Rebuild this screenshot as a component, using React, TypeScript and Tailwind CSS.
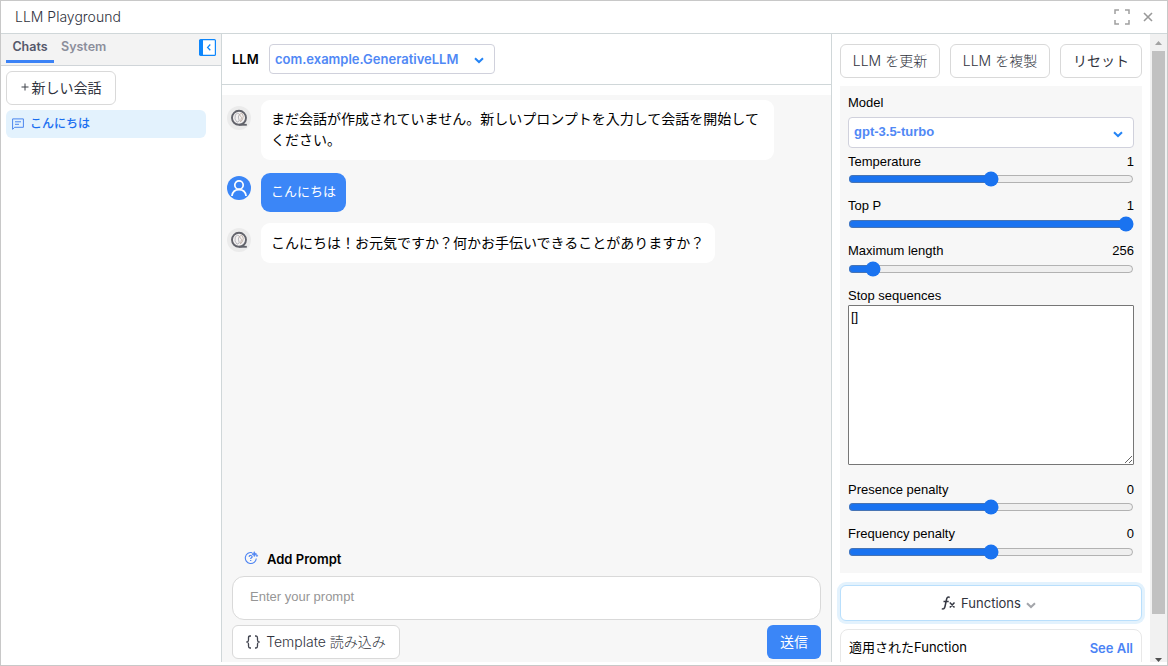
import type { ReactNode } from "react";

const buttonBase =
  "flex shrink-0 items-center justify-center rounded-md border border-[#d9d9d9] bg-white pb-[2px] text-[14px] whitespace-nowrap text-[#30333d]";

function Chevron({ className }: { className: string }) {
  return (
    <svg viewBox="0 0 10 7" className={className} fill="none" stroke="currentColor" strokeWidth="2">
      <path d="M1 1.2 5 5l4-3.8" />
    </svg>
  );
}

function BotAvatar() {
  return (
    <svg viewBox="0 0 24 24" className="h-6 w-6 shrink-0">
      <circle cx="12" cy="12" r="12" fill="#ebebeb" />
      <circle cx="12" cy="11.8" r="7" fill="#f3f1f1" stroke="#62636b" strokeWidth="1.900" />
      <path d="M12 18.800h7.800" stroke="#62636b" strokeWidth="1.800" />
      <path d="M8.300 8.800 10.800 7l1.500 1.500-1 2.500 1 4-2.300 1.200-2-3.200z" fill="none" stroke="#a9a9b0" strokeWidth=".8" />
      <path d="m12.300 8.500 2.500-1.300 1.500 3-.8 3.300-2 2.300 1-4.300z" fill="none" stroke="#b7a79d" strokeWidth=".8" />
    </svg>
  );
}

function UserAvatar() {
  return (
    <svg viewBox="0 0 24 24" className="h-6 w-6 shrink-0" fill="none" stroke="white" strokeWidth="1.700">
      <circle cx="12" cy="12" r="12" fill="#3b86f7" stroke="none" />
      <circle cx="12" cy="9" r="4.200" />
      <path d="M4.900 20c.5-4 3-6.400 7.100-6.400s6.600 2.400 7.100 6.400" />
    </svg>
  );
}

function Message({ avatar, children, className }: { avatar: ReactNode; children: ReactNode; className: string }) {
  return (
    <div className="flex items-start gap-[10px]">
      <div className="pt-[6px]">{avatar}</div>
      <div className={`rounded-[9px] px-[10px] ${className}`}>{children}</div>
    </div>
  );
}

function Slider({ label, value, position, className, inputClassName }: { label: string; value: string; position: number; className: string; inputClassName: string }) {
  return (
    <div className={className}>
      <div className="flex h-[17px] items-center justify-between">
        <span>{label}</span>
        <span>{value}</span>
      </div>
      <input
        type="range"
        min={0}
        max={1000}
        defaultValue={position}
        aria-label={label}
        className={`block h-4 w-full accent-[#1a73f0] ${inputClassName}`}
      />
    </div>
  );
}

function Sidebar() {
  return (
    <aside className="flex w-[221px] shrink-0 flex-col border-r border-[#d0d7d9]">
      <div className="flex h-8 items-start border-b border-[#d0d5d9] bg-[#f3f3f3] pl-[5px] text-[12.500px] font-semibold">
        <div className="flex h-[29px] w-12 items-center justify-center border-b-[3px] border-[#3b82f6] text-[#55586b]">Chats</div>
        <div className="flex h-[26px] items-center pl-[7px] text-[#8b8e9b]">System</div>
        <svg viewBox="0 0 17 17" className="mt-[5px] mr-[5px] ml-auto h-[17px] w-[17px]">
          <rect x=".6" y=".6" width="15.800" height="15.800" rx="1" fill="white" stroke="#0d86fb" strokeWidth="1.200" />
          <path d="M0 1h4v15H0z" fill="#0d86fb" />
          <path d="m11.300 5.500-2.700 2.900 2.700 2.900" fill="none" stroke="#0d86fb" strokeWidth="1.300" />
        </svg>
      </div>
      <div className="flex flex-col items-start gap-[5px] px-[5px] pt-[5px]">
        <button className={`${buttonBase} h-[34px] w-[110px] gap-[3px]`}>
          <svg viewBox="0 0 8 8" className="h-2 w-2" stroke="#3d4049">
            <path d="M4 .5v7M.5 4h7" />
          </svg>
          新しい会話
        </button>
        <div className="flex h-7 w-[200px] items-center gap-[6px] rounded-md bg-[#e3f2fd] pl-[6px] text-[12px] font-medium text-[#1a6ef0]">
          <svg viewBox="0 0 12 12" className="h-3 w-3" fill="none" stroke="#4b86ee">
            <path d="M.6 11.300V.9h10.800v8.400H2.700zM3 3.800h6M3 6.300h4" />
          </svg>
          <span className="-mt-px">こんにちは</span>
        </div>
      </div>
    </aside>
  );
}

function Conversation() {
  return (
    <main className="flex w-[610px] shrink-0 flex-col border-r border-[#d0d7d9]">
      <div className="flex h-[51px] shrink-0 items-center border-b border-[#d0d7d9] pl-[10px]">
        <span className="mt-[2px] w-[37px] text-[13px] font-semibold">LLM</span>
        <div className="flex h-[30px] w-[226px] items-center justify-between rounded border border-[#d0d1dc] pr-[10px] pl-[5px] text-[13px] font-semibold text-[#5088f5]">
          <span className="mt-px">com.example.GenerativeLLM</span>
          <Chevron className="mt-[2px] h-[7px] w-[10px] text-[#2484f5]" />
        </div>
      </div>
      <div className="mt-[10px] flex min-h-0 flex-1 flex-col bg-[#f7f7f7]">
        <div className="flex flex-1 flex-col pt-[5px] pl-[5px] text-[14px]">
          <Message avatar={<BotAvatar />} className="h-[60px] w-[513px] bg-white pt-[9px] leading-[20.500px]">
            まだ会話が作成されていません。新しいプロンプトを入力して会話を開始してください。
          </Message>
          <div className="h-[13px]" />
          <Message
            avatar={<div className="-mt-[3px]"><UserAvatar /></div>}
            className="h-[39px] w-[85px] bg-[#3b86f7] text-[13px] leading-[37px] whitespace-nowrap text-white"
          >
            こんにちは
          </Message>
          <div className="h-[11px]" />
          <Message avatar={<div className="-mt-px"><BotAvatar /></div>} className="h-10 w-[454px] bg-white leading-[39px] whitespace-nowrap">
            こんにちは！お元気ですか？何かお手伝いできることがありますか？
          </Message>
        </div>
        <div className="flex h-[27px] items-start gap-2 pl-[22px] text-[13px] font-semibold">
          <svg viewBox="0 0 15 15" className="mt-[2px] h-[15px] w-[15px]" fill="none" stroke="#4c83f2">
            <path d="M8.300 1.700A5.500 5.500 0 1 0 12.300 7.500" strokeWidth="1.100" />
            <path d="M5.100 5.900c.1-2 3.200-1.800 3 0-.1 1-1.400.9-1.400 2.100M6.700 9v1.100" strokeWidth="1.200" />
            <path d="m10.300.7.700 1.700 1.700.7-1.700.7-.7 1.700-.7-1.700-1.700-.7 1.700-.7zM12.900 3.500v2.400M11.700 4.700h2.400" fill="#4c83f2" strokeWidth=".8" />
          </svg>
          <span className="leading-[21px]">Add Prompt</span>
        </div>
        <div className="mx-[10px] flex h-11 shrink-0 items-center rounded-xl border border-[#d9d9d9] bg-white pb-[3px] pl-[17px] font-['Liberation_Sans'] text-[13px] text-[#969696]">
          Enter your prompt
        </div>
        <div className="mx-[10px] mt-[5px] mb-[3px] flex justify-between">
          <button className={`${buttonBase} h-[34px] w-[168px] gap-[6px]`}>
            <svg viewBox="0 0 14 14" className="mt-[2px] h-[14px] w-[14px]" fill="none" stroke="#41444f" strokeWidth="1.300">
              <path d="M5 1H4C2.500 1 2.500 2 2.500 3v2c0 1-.5 1.700-1.500 2 1 .3 1.500 1 1.500 2v2c0 1 0 2 1.500 2h1M9 1h1c1.500 0 1.500 1 1.500 2v2c0 1 .5 1.700 1.500 2-1 .3-1.500 1-1.500 2v2c0 1 0 2-1.500 2H9" />
            </svg>
            <span className="font-light">Template 読み込み</span>
          </button>
          <button className="h-[34px] w-[54px] rounded-md bg-[#3b86f7] pb-[2px] text-[14px] text-white">送信</button>
        </div>
      </div>
    </main>
  );
}

function Settings() {
  return (
    <section className="flex h-[628px] w-[318px] shrink-0 flex-col overflow-hidden px-2 pt-[10px]">
      <div className="flex w-[302px] shrink-0 gap-[10px]">
        <button className={`${buttonBase} h-[34px] w-[100px] font-light`}>LLM を更新</button>
        <button className={`${buttonBase} h-[34px] w-[100px] font-light`}>LLM を複製</button>
        <button className={`${buttonBase} h-[34px] w-[82px]`}>リセット</button>
      </div>
      <div className="mt-2 h-[487px] shrink-0 bg-[#f7f7f7] px-2 pt-2 font-['Liberation_Sans'] text-[13px]">
        <div className="h-[17px] leading-[17px]">Model</div>
        <div className="mt-[6px] flex h-[31px] items-center justify-between rounded border border-[#d0d1dc] bg-white pr-[10px] pl-[5px] font-bold text-[#5088f5]">
          <span className="-mt-px">gpt-3.5-turbo</span>
          <Chevron className="mt-[3px] h-[7px] w-[10px] text-[#2484f5]" />
        </div>
        <Slider label="Temperature" value="1" position={500} className="mt-[5px] h-[44px]" inputClassName="mt-px" />
        <Slider label="Top P" value="1" position={1000} className="h-[45px]" inputClassName="mt-[2px]" />
        <Slider label="Maximum length" value="256" position={63} className="h-[45px]" inputClassName="mt-[2px]" />
        <div className="h-[18px] leading-[17px]">Stop sequences</div>
        <textarea
          defaultValue="[]"
          aria-label="Stop sequences"
          className="block h-[160px] w-full resize rounded-[1px] border border-[#767676] bg-white px-[2px] pt-px text-[13px]"
        />
        <Slider label="Presence penalty" value="0" position={500} className="mt-[16px] h-[44px]" inputClassName="mt-px" />
        <Slider label="Frequency penalty" value="0" position={500} className="h-[45px]" inputClassName="mt-[2px]" />
      </div>
      <button className="mt-3 flex h-9 shrink-0 items-center justify-center rounded-md border border-[#b9dffc] bg-white pr-[5px] text-[13px] text-[#30333d] ring-[3px] ring-[#e3f2fd]">
        <svg viewBox="0 0 15 14" className="mr-[5px] h-[14px] w-[15px]" fill="none" stroke="#353843" strokeWidth="1.500">
          <path d="M8.700 1.500C6.500.3 5.800 2 5.400 4L4 10.500C3.600 12.500 2.500 13.600.8 12.700M2.500 5.500h5.200M8.800 6.500l4.700 5M13.500 6.500l-4.700 5" />
        </svg>
        <span className="mt-[2px]">Functions</span>
        <Chevron className="mt-[4px] ml-[5px] h-[7px] w-[10px] text-[#a3a5aa]" />
      </button>
      <div className="mt-2 flex h-12 shrink-0 items-start justify-between rounded-lg border border-[#e8e8e8] px-2 text-[13px]">
        <span className="leading-[34px]">適用されたFunction</span>
        <span className="leading-[37px] font-semibold text-[#4b83f5]">See All</span>
      </div>
    </section>
  );
}

export default function App() {
  return (
    <div className="flex h-[666px] w-[1168px] flex-col overflow-hidden border border-[#c8c8c8] bg-white font-[Inter,'Noto_Sans_CJK_JP',sans-serif] text-black">
      <header className="flex h-[33px] shrink-0 items-center border-b border-[#d0d7d9] pr-[14px] pl-[14px] text-[14px] text-[#30333d]">
        <span className="-mt-px font-light">LLM Playground</span>
        <svg viewBox="0 0 16 16" className="ml-auto h-4 w-4" fill="none" stroke="#a0a0a0" strokeWidth="1.500">
          <path d="M1 5V1h4M11 1h4v4M15 11v4h-4M5 15H1v-4" />
        </svg>
        <svg viewBox="0 0 10 10" className="ml-[13px] h-[10px] w-[10px]" stroke="#999999" strokeWidth="1.600">
          <path d="m1 1 8 8M9 1 1 9" />
        </svg>
      </header>
      <div className="flex h-[628px] shrink-0">
        <Sidebar />
        <Conversation />
        <Settings />
        <div className="flex w-[17px] shrink-0 flex-col items-center bg-[#f1f1f1]">
          <svg viewBox="0 0 7 4" className="mt-[7px] h-1 w-[7px]" fill="#a3a3a3">
            <path d="M0 4 3.500 0 7 4z" />
          </svg>
          <div className="mt-[6px] h-[563px] w-[13px] bg-[#c1c1c1]" />
          <svg viewBox="0 0 7 4" className="mt-auto h-1 w-[7px]" fill="#505050">
            <path d="m0 0 3.500 4L7 0z" />
          </svg>
        </div>
      </div>
    </div>
  );
}
